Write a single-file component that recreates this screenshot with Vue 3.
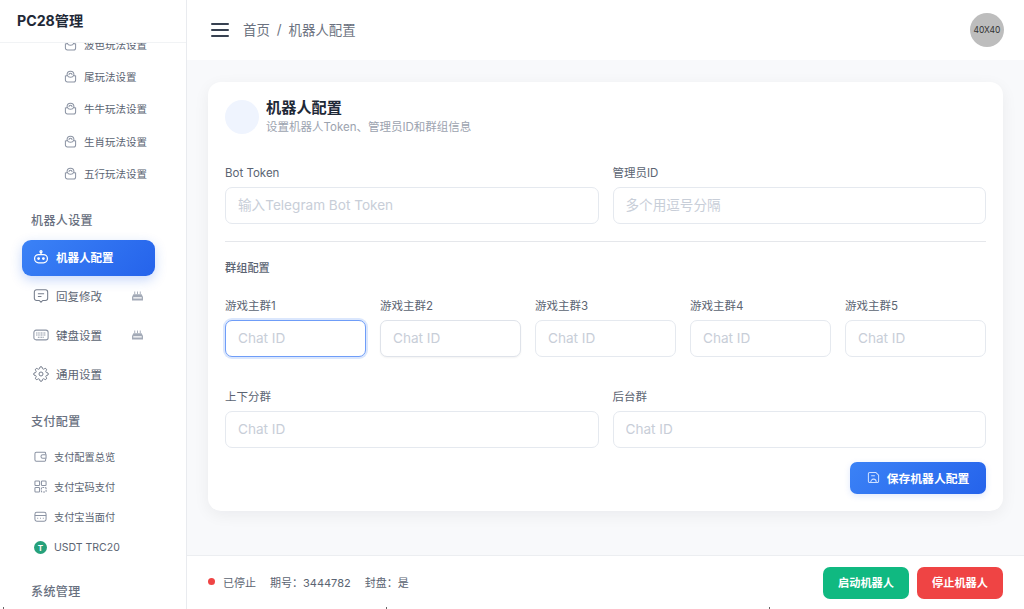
<script setup>
const subItems = ['波色玩法设置', '尾玩法设置', '牛牛玩法设置', '生肖玩法设置', '五行玩法设置']
const groups = ['游戏主群1', '游戏主群2', '游戏主群3', '游戏主群4', '游戏主群5']
</script>

<template>
  <div class="app">
    <aside class="side">
      <div class="brand">PC28管理</div>
      <nav class="nav">
        <ul class="sub">
          <li v-for="s in subItems" :key="s">
            <svg class="i14" viewBox="0 0 14 14" fill="none" stroke="#8b93a3" stroke-width="1.1"><path d="M3.300 6.200V5a3.700 3.700 0 0 1 7.400 0v1.200"/><path d="M5.300 5.300a1.700 1.700 0 0 1 3.400 0"/><path d="M1.500 6.500 3.800 6c.8 2.400 5.600 2.400 6.400 0l2.300.5v4.200a2.200 2.200 0 0 1-2.200 2.200H3.700a2.200 2.200 0 0 1-2.200-2.200z"/></svg>
            <span>{{ s }}</span>
          </li>
        </ul>
        <div class="sec first">机器人设置</div>
        <div class="item active">
          <svg class="i18" viewBox="0 0 18 18" fill="none" stroke="#fff" stroke-width="1.4"><circle cx="9" cy="3" r="1.1"/><path d="M9 4v2"/><rect x="1.800" y="6.200" width="14.400" height="9.300" rx="4.400"/><circle cx="6.300" cy="10.800" r=".9" fill="#fff"/><circle cx="11.700" cy="10.800" r=".9" fill="#fff"/></svg>
          <span>机器人配置</span>
        </div>
        <div class="item">
          <svg class="i18" viewBox="0 0 18 18" fill="none" stroke="#767e8d" stroke-width="1.2"><path d="M4 2h10a2.500 2.500 0 0 1 2.500 2.500v7A2.500 2.500 0 0 1 14 14h-3l-2 2-2-2H4a2.500 2.500 0 0 1-2.500-2.500v-7A2.500 2.500 0 0 1 4 2z"/><path d="M5.500 6.500h7M5.500 9.500h4"/></svg>
          <span>回复修改</span>
          <svg class="tag" viewBox="0 0 12 10" fill="#a3aab7"><path d="M2.500 0h1v3h-1zM5.500 0h1v3h-1zM8.500 0h1v3h-1z"/><path d="M1.500 3.200h9L12 6v4H0V6zM1.400 6.400v1.200h9.200V6.400z" fill-rule="evenodd"/></svg>
        </div>
        <div class="item">
          <svg class="i18" viewBox="0 0 18 18" fill="none" stroke="#8b93a3" stroke-width="1.2"><rect x="1" y="3.500" width="16" height="11" rx="2.500"/><path d="M3.500 6.800h11M3.500 9h11M5.500 11.500h7" stroke-dasharray="1.200 .6"/></svg>
          <span>键盘设置</span>
          <svg class="tag" viewBox="0 0 12 10" fill="#a3aab7"><path d="M2.500 0h1v3h-1zM5.500 0h1v3h-1zM8.500 0h1v3h-1z"/><path d="M1.500 3.200h9L12 6v4H0V6zM1.400 6.400v1.200h9.200V6.400z" fill-rule="evenodd"/></svg>
        </div>
        <div class="item">
          <svg class="i18" viewBox="0 0 24 24" fill="none" stroke="#767e8d" stroke-width="1.500"><circle cx="12" cy="12" r="3"/><path d="M19.400 15a1.650 1.650 0 0 0 .33 1.820l.06.06a2 2 0 0 1 0 2.830 2 2 0 0 1-2.830 0l-.06-.06a1.650 1.650 0 0 0-1.820-.33 1.650 1.650 0 0 0-1 1.510V21a2 2 0 0 1-2 2 2 2 0 0 1-2-2v-.09A1.650 1.650 0 0 0 9 19.400a1.650 1.650 0 0 0-1.820.33l-.06.06a2 2 0 0 1-2.830 0 2 2 0 0 1 0-2.830l.06-.06a1.650 1.650 0 0 0 .33-1.820 1.650 1.650 0 0 0-1.510-1H3a2 2 0 0 1-2-2 2 2 0 0 1 2-2h.09A1.650 1.650 0 0 0 4.600 9a1.650 1.650 0 0 0-.33-1.820l-.06-.06a2 2 0 0 1 0-2.830 2 2 0 0 1 2.830 0l.06.06a1.650 1.650 0 0 0 1.820.33H9a1.650 1.650 0 0 0 1-1.510V3a2 2 0 0 1 2-2 2 2 0 0 1 2 2v.09a1.650 1.650 0 0 0 1 1.510 1.650 1.650 0 0 0 1.820-.33l.06-.06a2 2 0 0 1 2.830 0 2 2 0 0 1 0 2.830l-.06.06a1.650 1.650 0 0 0-.33 1.820V9a1.650 1.650 0 0 0 1.510 1H21a2 2 0 0 1 2 2 2 2 0 0 1-2 2h-.09a1.650 1.650 0 0 0-1.510 1z"/></svg>
          <span>通用设置</span>
        </div>
        <div class="sec pay">支付配置</div>
        <div class="pitem">
          <svg class="i14" viewBox="0 0 14 14" fill="none" stroke="#8b93a3" stroke-width="1.1"><path d="M12.500 4.500V3.500a1 1 0 0 0-1-1h-9a1.500 1.500 0 0 0-1.500 1.500v6.500a1.500 1.500 0 0 0 1.500 1.500h9a1 1 0 0 0 1-1V9.500"/><path d="M13 5H9.500a2 2 0 0 0 0 4H13z"/></svg>
          <span>支付配置总览</span>
        </div>
        <div class="pitem">
          <svg class="i14" viewBox="0 0 14 14" fill="none" stroke="#8b93a3" stroke-width="1.100"><rect x="1" y="1" width="5" height="5" rx="1"/><rect x="8" y="1" width="5" height="5" rx="1"/><rect x="1" y="8" width="5" height="5" rx="1"/><rect x="8" y="8" width="5" height="5" rx="1" stroke-dasharray="2 1"/></svg>
          <span>支付宝码支付</span>
        </div>
        <div class="pitem">
          <svg class="i14" viewBox="0 0 14 14" fill="none" stroke="#8b93a3" stroke-width="1.100"><rect x="1" y="2.500" width="12" height="9.500" rx="2"/><path d="M1 6h12M3.500 9h1M9.500 9h1M6.500 9h1"/></svg>
          <span>支付宝当面付</span>
        </div>
        <div class="pitem usdt">
          <span class="coin">T</span>
          <span class="usdt-text">USDT TRC20</span>
        </div>
        <div class="sec sys">系统管理</div>
      </nav>
    </aside>

    <div class="body">
      <header class="top">
        <div class="crumbs">
          <span class="burger"><i></i><i></i><i></i></span>
          <span>首页</span><span class="slash">/</span><span>机器人配置</span>
        </div>
        <div class="avatar">40X40</div>
      </header>

      <main class="main">
        <section class="card">
          <div class="card-head">
            <div class="dot"></div>
            <div>
              <h2>机器人配置</h2>
              <p>设置机器人Token、管理员ID和群组信息</p>
            </div>
          </div>

          <div class="row2">
            <label class="field"><span>Bot Token</span><input placeholder="输入Telegram Bot Token"></label>
            <label class="field"><span>管理员ID</span><input placeholder="多个用逗号分隔"></label>
          </div>

          <hr class="rule">
          <div class="group-title">群组配置</div>

          <div class="row5">
            <label v-for="(g, n) in groups" :key="g" class="field">
              <span>{{ g }}</span>
              <input placeholder="Chat ID" :class="{ focus: n === 0, alt: n === 1 }">
            </label>
          </div>

          <div class="row2 third">
            <label class="field"><span>上下分群</span><input placeholder="Chat ID"></label>
            <label class="field"><span>后台群</span><input placeholder="Chat ID"></label>
          </div>

          <div class="actions">
            <button class="save" type="button">
              <svg viewBox="0 0 14 14" fill="none" stroke="#cfe0ff" stroke-width="1.100"><path d="M3 1.500h6.500L12.500 4.500V11a1.500 1.500 0 0 1-1.500 1.500H3A1.500 1.500 0 0 1 1.500 11V3A1.500 1.500 0 0 1 3 1.500z"/><path d="M4 12.500c0-5 6-5 6 0M4.500 5h4"/></svg>
              保存机器人配置
            </button>
          </div>
        </section>
      </main>

      <footer class="foot">
        <div class="status">
          <i class="red"></i><span>已停止</span><span class="gap">期号：3444782</span><span class="gap">封盘：是</span>
        </div>
        <div class="btns">
          <button class="start" type="button">启动机器人</button>
          <button class="stop" type="button">停止机器人</button>
        </div>
      </footer>
    </div>
    <i class="tick t1"></i><i class="tick t2"></i><i class="tick t3"></i>
  </div>
</template>

<style>
html, body { margin: 0; overflow: hidden; }
</style>

<style scoped>
* { box-sizing: border-box; }
.app {
  position: relative; width: 1024px; height: 609px; display: flex; overflow: hidden; background: #f8f9fb;
  font-family: Inter, "Noto Sans CJK SC", sans-serif; color: #4b5563;
}
.tick { position: absolute; bottom: 0; width: 1px; height: 2px; background: #666; }
.t1 { left: 3px; }
.t2 { left: 386px; }
.t3 { left: 769px; }
.side { width: 187px; flex: none; background: #fff; border-right: 1px solid #e9ebef; display: flex; flex-direction: column; }
.brand { height: 43px; flex: none; padding: 0 17px 3px; display: flex; align-items: center; font-size: 14.200px; font-weight: 700; color: #1f2937; border-bottom: 1px solid #f1f3f5; position: relative; z-index: 1; background: #fff; }
.nav { flex: 1; overflow: hidden; }
.sub { list-style: none; margin: -15px 0 0; padding: 0; }
.sub li { height: 32.400px; padding-left: 64px; display: flex; align-items: center; gap: 7px; font-size: 10.500px; color: #5b6472; }
.i14 { width: 13px; height: 13px; flex: none; }
.i18 { width: 16px; height: 16px; flex: none; margin-left: -1px; }
.sec { font-size: 12px; font-weight: 500; letter-spacing: .4px; color: #687080; padding-left: 31px; line-height: 18px; }
.first { margin-top: 22.500px; }
.item { height: 36px; margin: 0 31px 3px 22px; padding: 0 12px 2px; display: flex; align-items: center; gap: 7px; font-size: 11.500px; color: #5b6472; border-radius: 9px; }
.first + .item { margin-top: 10px; }
.item span { flex: 1; }
.active { background: linear-gradient(135deg, #3b82f6, #2563eb); color: #fff; font-weight: 600; box-shadow: 0 4px 12px rgba(37, 99, 235, .25); }
.tag { width: 11px; height: 10px; flex: none; }
.pay { margin-top: 19.500px; }
.pitem { height: 30px; padding-left: 34px; display: flex; align-items: center; gap: 7px; font-size: 10.200px; color: #5b6472; }
.pay + .pitem { margin-top: 11px; }
.usdt { margin-top: 1px; }
.usdt-text { font-size: 10.500px; }
.coin { width: 13px; height: 13px; border-radius: 50%; background: #26a17b; color: #fff; font-size: 8px; font-weight: 700; display: flex; align-items: center; justify-content: center; flex: none; }
.sys { margin-top: 20px; }

.body { flex: 1; min-width: 0; display: flex; flex-direction: column; }
.top { height: 60px; flex: none; background: #fff; padding: 0 20px 0 24px; display: flex; align-items: center; justify-content: space-between; }
.crumbs { display: flex; align-items: center; font-size: 13.400px; color: #6b7280; padding-bottom: 3px; }
.burger { width: 18px; display: flex; flex-direction: column; gap: 4px; margin: 3px 14px 0 0; }
.burger i { display: block; height: 2px; background: #374151; border-radius: 1px; }
.slash { margin: 0 7px; }
.avatar { width: 34px; height: 34px; border-radius: 50%; background: #bdbdbd; color: #333; font-size: 8.500px; display: flex; align-items: center; justify-content: center; }

.main { flex: 1; padding: 22px 21px 0 21px; min-height: 0; }
.card { height: 429px; background: #fff; border-radius: 13px; padding: 17px 17px 0; box-shadow: 0 4px 16px rgba(15, 23, 42, .06); }
.card-head { display: flex; align-items: center; gap: 7px; }
.dot { width: 34px; height: 34px; border-radius: 50%; background: #eff4fe; }
h2 { margin: 0; font-size: 15.200px; line-height: 18px; font-weight: 700; color: #1f2937; }
.card-head p { margin: 3px 0 0; font-size: 11.500px; line-height: 15px; color: #9ca3af; }
.row2 { display: grid; grid-template-columns: 1fr 1fr; gap: 14px; }
.card-head + .row2 { margin-top: 31px; }
.field { display: flex; flex-direction: column; gap: 7px; min-width: 0; }
.field span { font-size: 11.500px; line-height: 14px; color: #5b6472; }
input { width: 100%; height: 37px; border: 1px solid #e5e9ef; border-radius: 7px; padding: 0 12px 2px; background: #fff; font: inherit; font-size: 13.600px; outline: none; }
input::placeholder { color: #c8ced8; }
input.focus { border-color: #6f9df8; box-shadow: 0 0 0 2px #dbe7fd; }
input.alt { border-color: #dfe3ea; box-shadow: 0 1px 2px rgba(0,0,0,.05); }
.rule { border: 0; border-top: 1px solid #e5e7eb; margin: 17px 0 19px; }
.group-title { font-size: 11.200px; line-height: 14px; font-weight: 500; color: #5b6472; margin-bottom: 24px; }
.row5 { display: grid; grid-template-columns: repeat(5, 1fr); gap: 14px; }
.third { margin-top: 33px; }
.actions { display: flex; justify-content: flex-end; margin-top: 14px; }
button { border: 0; color: #fff; font: inherit; font-size: 11.200px; font-weight: 600; border-radius: 7px; padding: 0 0 2px; }
.save { width: 136px; height: 32px; font-size: 11.800px; background: linear-gradient(135deg, #3b82f6, #2563eb); display: flex; align-items: center; justify-content: center; gap: 7px; box-shadow: 0 2px 6px rgba(37, 99, 235, .15); }
.save svg { width: 13px; height: 13px; }
.foot { height: 54px; flex: none; background: #fff; border-top: 1px solid #eceef1; padding: 0 21px; display: flex; align-items: center; justify-content: space-between; }
.status { display: flex; align-items: center; font-size: 11px; color: #5b6472; padding-bottom: 2px; }
.red { width: 7px; height: 7px; border-radius: 50%; background: #ef4444; margin-right: 8px; }
.gap { margin-left: 14px; }
.btns { display: flex; gap: 8px; }
.btns button { width: 86px; height: 32px; }
.start { background: #10b981; }
.stop { background: #ef4444; }
</style>
